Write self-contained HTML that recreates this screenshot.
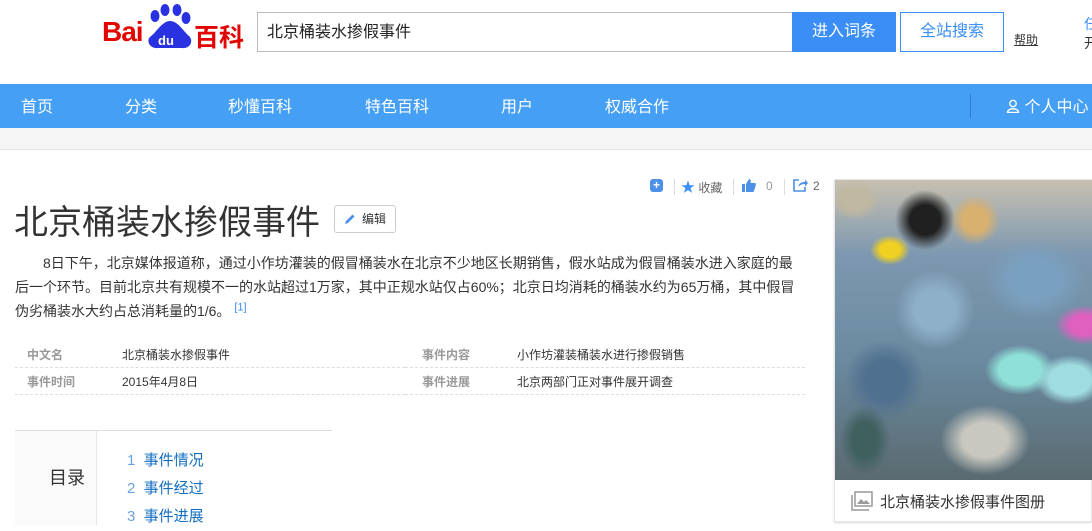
<!DOCTYPE html>
<html><head><meta charset="utf-8"><style>
*{margin:0;padding:0;box-sizing:border-box}
body{width:1092px;height:525px;overflow:hidden;background:#fff;font-family:"Liberation Sans","Noto Sans CJK SC",sans-serif;color:#333;position:relative}
.a{position:absolute;white-space:nowrap}
.nav{position:absolute;left:0;top:84px;width:1092px;height:44px;background:#459ff5}
.nav span{position:absolute;top:9px;color:#fff;font-size:16px}
.row{position:absolute;height:26px;border-bottom:1px dashed #ddd;font-size:12px;line-height:26px}
.lab{color:#999;font-weight:bold}
</style></head><body>
<!-- logo -->
<div class="a" style="left:102px;top:16px;font-size:28px;font-weight:bold;color:#e10601;letter-spacing:-1px;font-family:'Liberation Sans',sans-serif">Bai</div>
<svg class="a" style="left:144px;top:3px" width="50" height="46" viewBox="0 0 50 46">
<ellipse cx="11" cy="13" rx="4.5" ry="6" fill="#2932e1"/>
<ellipse cx="21" cy="7" rx="4.5" ry="6" fill="#2932e1"/>
<ellipse cx="33" cy="7" rx="4.5" ry="6" fill="#2932e1"/>
<ellipse cx="42" cy="15" rx="4.5" ry="6" fill="#2932e1"/>
<path d="M26 18 C18 18 12 30 6 34 C2 38 6 46 14 45 L38 45 C46 46 50 38 45 33 C39 28 34 18 26 18Z" fill="#2932e1"/>
<text x="14" y="42" font-size="13" fill="#fff" font-family="Liberation Sans" font-weight="bold">du</text>
</svg>
<div class="a" style="left:194px;top:18px;font-size:25px;font-weight:bold;color:#e10601">百科</div>
<!-- search -->
<div class="a" style="left:257px;top:12px;width:536px;height:40px;border:1px solid #bbb;font-size:16px;line-height:40px;padding-left:9px;color:#222">北京桶装水掺假事件</div>
<div class="a" style="left:792px;top:12px;width:104px;height:40px;background:#3a8ef6;color:#fff;font-size:16px;line-height:40px;text-align:center">进入词条</div>
<div class="a" style="left:900px;top:12px;width:104px;height:40px;border:1px solid #3a8ef6;color:#3a8ef6;font-size:16px;line-height:38px;text-align:center">全站搜索</div>
<div class="a" style="left:1014px;top:31px;font-size:12px;text-decoration:underline;color:#333">帮助</div>
<div class="a" style="left:1084px;top:14px;font-size:14px;color:#3a8ef6">任</div>
<div class="a" style="left:1084px;top:33px;font-size:14px;color:#333">开</div>
<!-- nav -->
<div class="nav">
<span style="left:21px">首页</span><span style="left:125px">分类</span><span style="left:228px">秒懂百科</span><span style="left:365px">特色百科</span><span style="left:501px">用户</span><span style="left:605px">权威合作</span>
<div style="position:absolute;left:970px;top:10px;width:1px;height:24px;background:#2f7fd0"></div>
<span style="left:1006px">
<svg width="14" height="14" viewBox="0 0 14 14" style="vertical-align:-1px"><circle cx="7" cy="4.5" r="3.2" fill="none" stroke="#fff" stroke-width="1.4"/><path d="M1.5 13.5 C1.5 8.5 12.5 8.5 12.5 13.5Z" fill="none" stroke="#fff" stroke-width="1.4"/></svg> 个人中心</span>
</div>
<div class="a" style="left:0;top:128px;width:1092px;height:22px;background:#f5f5f5;border-bottom:1px solid #e4e4e4"></div>
<!-- tools -->
<div class="a" style="left:650px;top:179px;width:13px;height:13px;border-radius:3px;background:#4d90e8;color:#fff;font-size:12px;line-height:13px;text-align:center;font-weight:bold">+</div>
<div class="a" style="left:674px;top:179px;width:1px;height:16px;background:#ddd"></div>
<div class="a" style="left:681px;top:177px;font-size:12px;color:#666"><span style="color:#3a8ef6;font-size:14px">★</span> 收藏</div>
<div class="a" style="left:733px;top:179px;width:1px;height:16px;background:#ddd"></div>
<svg class="a" style="left:742px;top:178px" width="14" height="14" viewBox="0 0 14 14"><rect x="0" y="6" width="3" height="8" fill="#4d90e8"/><path d="M4 6 L7 1 C9 1 9 3 8.5 5 L13 5 C14 5 14 7 13.5 8 L12 13 C11.5 14 11 14 10 14 L4 14Z" fill="#4d90e8"/></svg>
<div class="a" style="left:766px;top:179px;font-size:12px;color:#999">0</div>
<div class="a" style="left:784px;top:179px;width:1px;height:16px;background:#ddd"></div>
<svg class="a" style="left:793px;top:178px" width="15" height="14" viewBox="0 0 15 14"><path d="M6 2 H1 V13 H12 V9" fill="none" stroke="#4d90e8" stroke-width="1.6"/><path d="M5 9 C6 5 9 4 12 4 V1.5 L15 5 L12 8.5 V6 C9 6 7 7 5 9Z" fill="#4d90e8"/></svg>
<div class="a" style="left:813px;top:179px;font-size:12px;color:#666">2</div>
<!-- title -->
<div class="a" style="left:14px;top:195px;font-size:34px;color:#333;font-weight:normal">北京桶装水掺假事件</div>
<div class="a" style="left:334px;top:205px;width:62px;height:28px;border:1px solid #ccc;border-radius:3px;font-size:12px;line-height:26px;padding-left:27px;color:#333">编辑
<svg style="position:absolute;left:9px;top:7px" width="12" height="12" viewBox="0 0 12 12"><path d="M1 11 L2 8 L8.5 1.5 L10.5 3.5 L4 10Z" fill="#4d90e8"/></svg></div>
<!-- summary -->
<div class="a" style="left:15px;top:251px;width:790px;white-space:normal;font-size:14px;line-height:24px;color:#333;text-indent:28px">8日下午，北京媒体报道称，通过小作坊灌装的假冒桶装水在北京不少地区长期销售，假水站成为假冒桶装水进入家庭的最后一个环节。目前北京共有规模不一的水站超过1万家，其中正规水站仅占60%；北京日均消耗的桶装水约为65万桶，其中假冒伪劣桶装水大约占总消耗量的1/6。 <sup style="color:#3a8ef6;font-size:11px;line-height:0">[1]</sup></div>
<!-- basic info -->
<div class="row" style="left:15px;top:342px;width:390px"><span class="lab a" style="left:12px">中文名</span><span class="a" style="left:107px">北京桶装水掺假事件</span></div>
<div class="row" style="left:15px;top:369px;width:390px"><span class="lab a" style="left:12px">事件时间</span><span class="a" style="left:107px">2015年4月8日</span></div>
<div class="row" style="left:405px;top:342px;width:400px"><span class="lab a" style="left:17px">事件内容</span><span class="a" style="left:112px">小作坊灌装桶装水进行掺假销售</span></div>
<div class="row" style="left:405px;top:369px;width:400px"><span class="lab a" style="left:17px">事件进展</span><span class="a" style="left:112px">北京两部门正对事件展开调查</span></div>
<!-- catalog -->
<div class="a" style="left:15px;top:430px;width:317px;height:1px;background:#ddd"></div>
<div class="a" style="left:15px;top:431px;width:82px;height:94px;background:#fafafa;border-right:1px solid #e6e6e6"></div>
<div class="a" style="left:49px;top:464px;font-size:18px;color:#333">目录</div>
<div class="a" style="left:127px;top:447px;font-size:15px;line-height:28px;color:#136ec2"><span style="color:#6aa3e0">1</span>&nbsp;&nbsp;事件情况<br><span style="color:#6aa3e0">2</span>&nbsp;&nbsp;事件经过<br><span style="color:#6aa3e0">3</span>&nbsp;&nbsp;事件进展</div>
<!-- image -->
<div class="a" style="left:834px;top:179px;width:258px;height:343px;border:1px solid #e6e6e6;box-shadow:0 1px 2px #ddd;background:#fff"></div>
<div class="a" style="left:835px;top:180px;width:257px;height:300px;overflow:hidden;background:
radial-gradient(ellipse 35px 25px at 235px 200px,#9fdde0 60%,transparent),
radial-gradient(ellipse 35px 25px at 185px 190px,#8ee0d8 60%,transparent),
radial-gradient(ellipse 45px 35px at 150px 260px,#c8c8c0 50%,transparent),
radial-gradient(ellipse 30px 20px at 250px 145px,#e060c0 50%,transparent),
radial-gradient(ellipse 25px 25px at 140px 40px,#d8b070 50%,transparent),
radial-gradient(ellipse 30px 30px at 90px 40px,#202020 50%,transparent),
radial-gradient(ellipse 20px 15px at 55px 70px,#f0d020 50%,transparent),
radial-gradient(ellipse 25px 35px at 30px 260px,#406060 50%,transparent),
radial-gradient(ellipse 40px 40px at 100px 130px,#8eb0c8 50%,transparent),
radial-gradient(ellipse 50px 40px at 200px 100px,#7aa0c0 50%,transparent),
radial-gradient(ellipse 40px 40px at 50px 200px,#507090 50%,transparent),
radial-gradient(ellipse 25px 20px at 20px 20px,#c0b8a0 50%,transparent),
linear-gradient(180deg,#c8c0b0 0%,#7d98b0 25%,#6a8aa0 60%,#5a6a70 100%)"></div>
<svg class="a" style="left:851px;top:491px" width="22" height="20" viewBox="0 0 22 20"><rect x="4" y="1" width="17" height="14" fill="none" stroke="#999" stroke-width="1.5"/><path d="M1 4 V19 H18" fill="none" stroke="#999" stroke-width="1.5"/><path d="M6 13 L10 8 L13 11 L15 9 L19 13Z" fill="#999"/></svg>
<div class="a" style="left:880px;top:491px;font-size:15px;color:#333">北京桶装水掺假事件图册</div>
</body></html>
